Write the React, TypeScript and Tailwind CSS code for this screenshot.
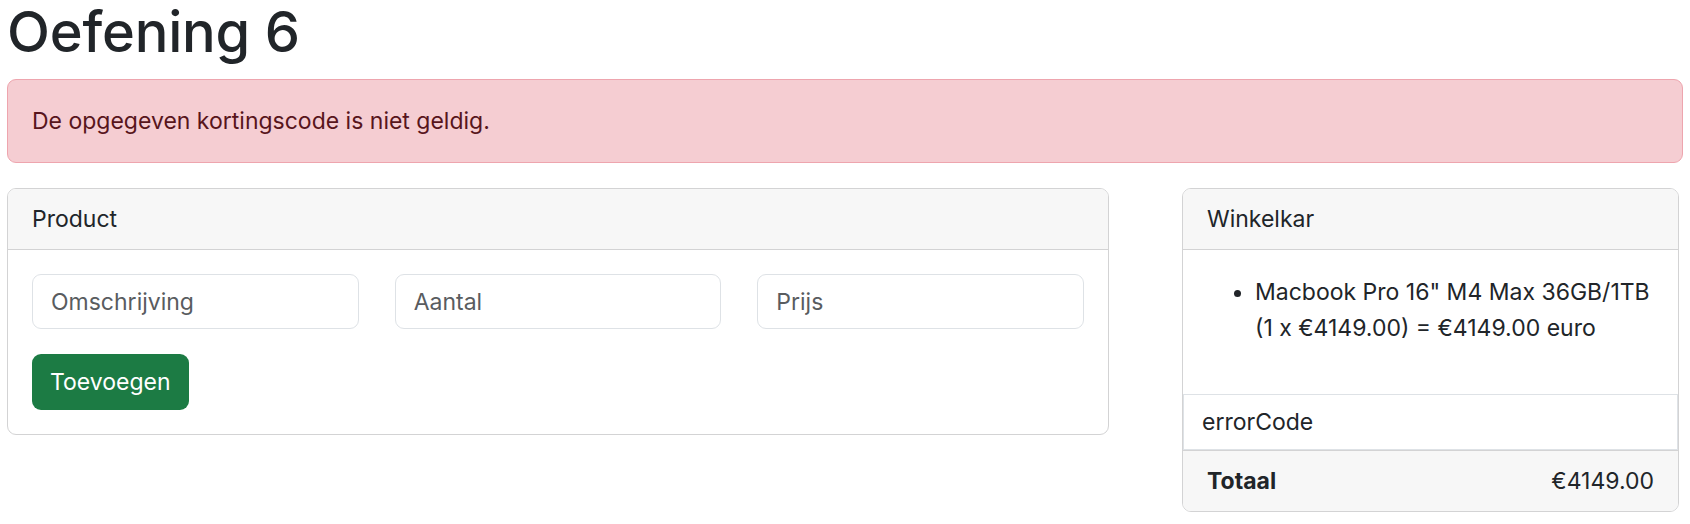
import React from "react";

const font = "font-['Inter','Liberation_Sans',sans-serif]";

export default function App() {
  return (
    <div className={`${font} px-[7px] text-[#212529] text-[23px] leading-[36px] bg-white min-h-[524px]`}>
      <h1 className="text-[56px] leading-[64px] font-medium tracking-[-0.2px] mb-[15px]">Oefening 6</h1>

      <div className="border border-[#eea5ae] bg-[#f5cdd2] text-[#58151c] rounded-[9px] px-[24px] py-[23px] mb-[25px]">
        De opgegeven kortingscode is niet geldig.
      </div>

      <div className="flex items-start gap-[73px]">
        {/* Product */}
        <div className="w-[1102px] border border-[#d3d3d4] rounded-[9px] overflow-hidden">
          <div className="bg-[#f7f7f7] px-[24px] py-[12px] border-b border-[#d3d3d4]">Product</div>
          <div className="p-[24px]">
            <div className="grid grid-cols-3 gap-x-[36px]">
              {["Omschrijving", "Aantal", "Prijs"].map((p) => (
                <input
                  key={p}
                  type="text"
                  placeholder={p}
                  className="h-[55px] w-full rounded-[9px] border border-[#dee2e6] px-[18px] outline-none placeholder:text-[#595c5f] text-[#212529]"
                />
              ))}
            </div>
            <button className="mt-[25px] h-[56px] px-[18px] rounded-[9px] bg-[#1c7b44] text-white">Toevoegen</button>
          </div>
        </div>

        {/* Winkelkar */}
        <div className="w-[497px] border border-[#d3d3d4] rounded-[9px] overflow-hidden">
          <div className="bg-[#f7f7f7] px-[24px] py-[12px] border-b border-[#d3d3d4]">Winkelkar</div>
          <div className="p-[24px]">
            <ul className="list-disc pl-[48px] mb-[24px]">
              <li>
                <span className="whitespace-nowrap">Macbook Pro 16" M4 Max 36GB/1TB</span>
                <br />
                <span className="whitespace-nowrap">(1 x €4149.00) = €4149.00 euro</span>
              </li>
            </ul>
          </div>
          <input
            type="text"
            defaultValue="errorCode"
            className="block h-[56px] w-full border border-[#dee2e6] px-[18px] outline-none text-[#212529]"
          />
          <div className="flex justify-between bg-[#f7f7f7] px-[24px] py-[12px] border-t border-[#d3d3d4]">
            <span className="font-bold">Totaal</span>
            <span>€4149.00</span>
          </div>
        </div>
      </div>
    </div>
  );
}
